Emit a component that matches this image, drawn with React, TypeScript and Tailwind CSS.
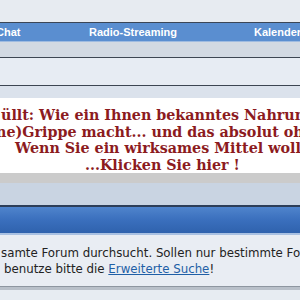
export default function App() {
  return (
    <div className="w-[300px] h-[300px] overflow-hidden bg-[#e7ecf2] font-['DejaVu_Sans',sans-serif]">
      {/* top strip */}
      <div className="h-[22px] bg-[#e7ebf1]" />

      {/* nav bar */}
      <div className="border-t border-[#3b4656] bg-[#5a8ed0] h-[19px] flex items-center whitespace-nowrap font-['Liberation_Sans',sans-serif] text-[11px] font-bold text-white">
        <span className="-ml-[4px] w-[93px] shrink-0">Chat</span>
        <span className="w-[165px] shrink-0">Radio-Streaming</span>
        <span className="shrink-0">Kalender</span>
      </div>
      <div className="h-[1px] bg-[#9fbbe0]" />
      <div className="h-[16px] bg-[#d2d9e2] border-b border-[#3d4652]" />
      <div className="h-[28px] bg-[#e7ecf3] border-b border-[#3d4652]" />
      <div className="h-[12px] bg-[#dbe2ec]" />

      {/* banner */}
      <div className="h-[75px] bg-white pt-[9px] overflow-hidden whitespace-nowrap font-['DejaVu_Serif',serif] font-bold text-[14.3px] leading-[16.5px] text-[#8c1b1e]">
        <div className="pl-[1px]">üllt: Wie ein Ihnen bekanntes Nahrungsmittel</div>
        <div className="-ml-[4px]">ne)Grippe macht... und das absolut ohne</div>
        <div className="pl-[15px]">Wenn Sie ein wirksames Mittel wollen</div>
        <div className="pl-[85px]">...Klicken Sie hier !</div>
      </div>

      {/* separators */}
      <div className="h-[10px] bg-[#cbcbcb]" />
      <div className="h-[24px] bg-[#c9d4e2] border-b-2 border-[#2d3e58]" />
      <div className="h-[28px] bg-gradient-to-b from-[#4f84cc] via-[#3a6fbd] to-[#2f62ad] border-b-2 border-[#a9c1e2]" />

      {/* search text */}
      <div className="h-[51px] bg-[#e9edf3] pt-[10px] whitespace-nowrap text-[11.8px] leading-[16px] text-[#222]">
        <div className="pl-[1px]">samte Forum durchsucht. Sollen nur bestimmte Foren</div>
        <div className="pl-[4px]">
          benutze bitte die{" "}
          <a href="#" className="text-[#1f5fa6] underline">Erweiterte Suche</a>!
        </div>
      </div>
      <div className="h-[4px] bg-[#b9c0c9] border-t border-[#8e96a0]" />
      <div className="h-[20px] bg-[#e7ecf2]" />
    </div>
  );
}
